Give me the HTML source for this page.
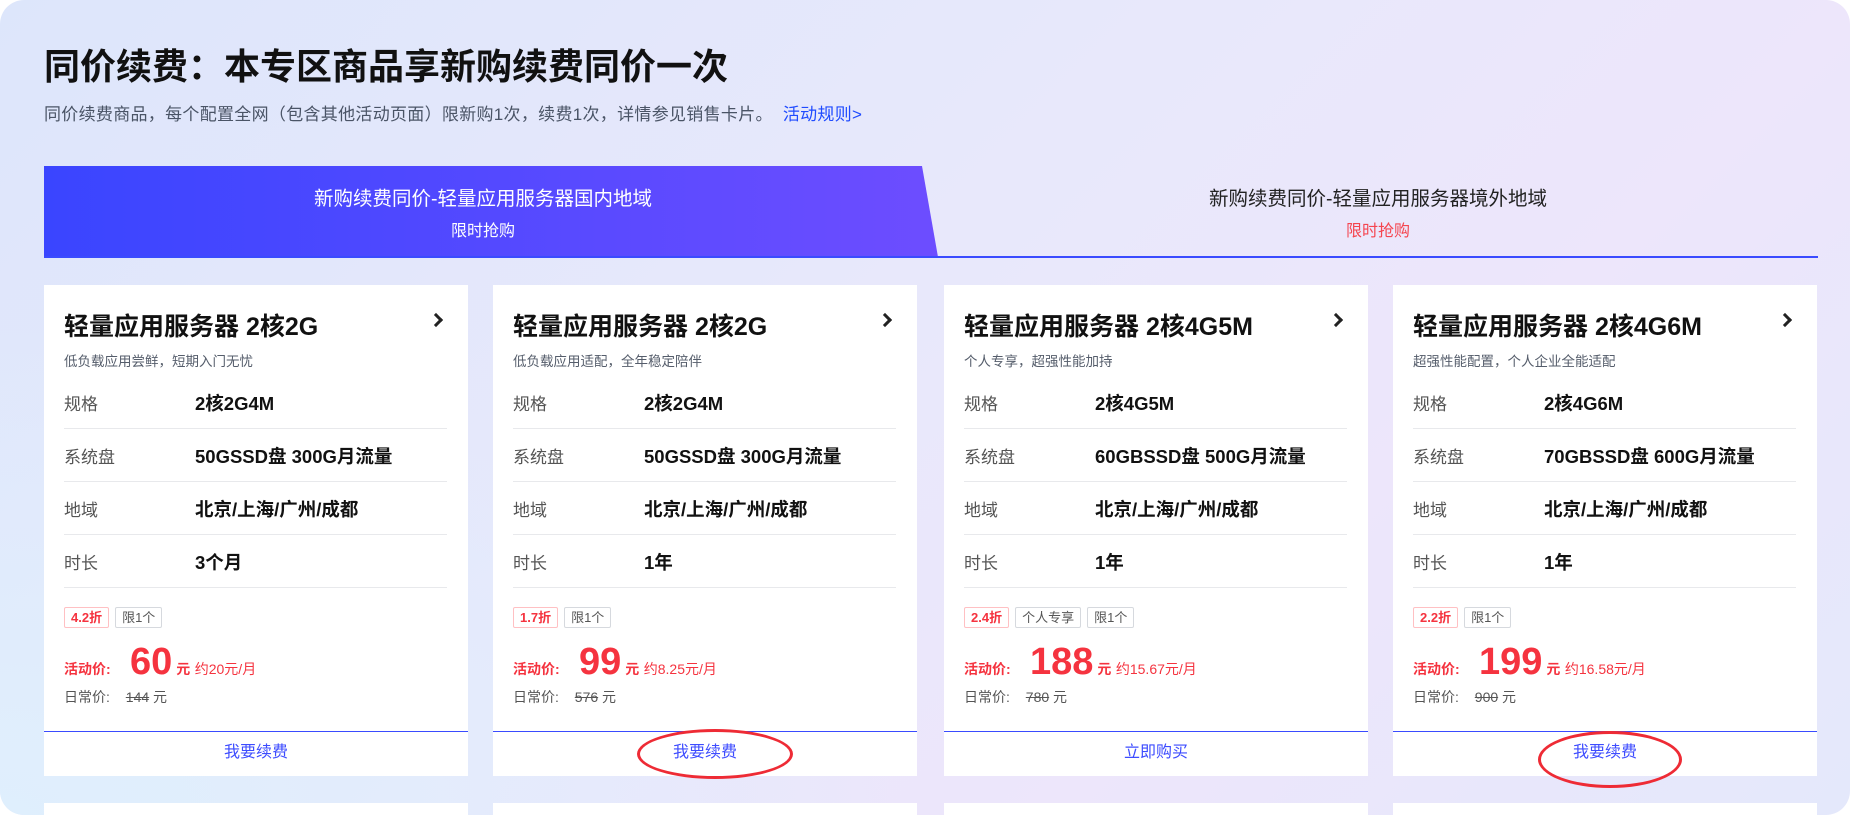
<!DOCTYPE html>
<html><head><meta charset="utf-8"><style>
*{margin:0;padding:0;box-sizing:border-box}
html,body{width:1850px;height:815px;overflow:hidden;background:#fff;font-family:"Liberation Sans","Noto Sans CJK SC",sans-serif}
.wrap{position:absolute;left:0;top:0;width:1850px;height:815px;border-radius:24px;background:linear-gradient(135deg,#dde6fb 0%,#e8e8fb 45%,#ede6fb 70%,#e4e8fb 100%);overflow:hidden}
.wrap:before{content:"";position:absolute;left:0;bottom:0;width:900px;height:500px;background:radial-gradient(ellipse at 0% 100%,#dfeffd 0%,rgba(223,239,253,0) 70%)}
h1{position:absolute;left:44px;top:38px;font-size:36px;font-weight:bold;color:#111;letter-spacing:0}
.sub{position:absolute;left:44px;top:100px;font-size:17px;color:#4a5466;letter-spacing:0.3px}
.sub a{color:#1f4bff;margin-left:10px}
.tabline{position:absolute;left:44px;top:256px;width:1774px;height:2px;background:#3a4bff}
.tab1{position:absolute;left:44px;top:166px;width:894px;height:91px;background:linear-gradient(90deg,#3a45ff,#6d4dff);clip-path:polygon(0 0,878px 0,894px 100%,0 100%);color:#fff;text-align:center}
.tab2{position:absolute;left:938px;top:166px;width:880px;height:91px;text-align:center;color:#222}
.t1{font-size:19.5px;margin-top:16px;padding-right:16px}
.t2{font-size:16px;margin-top:6px;padding-right:16px}
.tab2 .t1,.tab2 .t2{padding-right:0}
.tab2 .t2{color:#f5454f}
.card{position:absolute;top:285px;width:424px;height:491px;background:#fff}
.card2{position:absolute;top:803px;width:424px;height:40px;background:#fff}
.ct{position:absolute;left:20px;top:22px;font-size:25px;font-weight:bold;color:#111}
.arr{position:absolute;right:27px;top:30px;width:10px;height:10px;border-right:3px solid #222;border-top:3px solid #222;transform:rotate(45deg)}
.cs{position:absolute;left:20px;top:65px;font-size:13.5px;color:#555d6b}
.row{position:absolute;left:20px;width:383px;height:53px;border-bottom:1px solid #e8e9ec}
.row .l{position:absolute;left:0;top:14px;font-size:17px;color:#555}
.row .v{position:absolute;left:131px;top:14px;font-size:18.5px;font-weight:bold;color:#111}
.tags{position:absolute;left:20px;top:322px;display:flex;gap:6px}
.tag{height:21px;line-height:19px;padding:0 6px;font-size:13px;border:1px solid #d6d9de;color:#555;border-radius:2px}
.tag.r{border-color:#ffc0c3;color:#f5333f;font-weight:bold}
.pr{position:absolute;left:20px;top:356px;color:#f5333f;white-space:nowrap}
.pr .lb{font-size:14px;font-weight:bold;display:inline-block;width:66px}
.pr .n{font-size:38px;font-weight:bold}
.pr .y{font-size:14px;font-weight:bold;margin-left:4px}
.pr .m{font-size:14px}
.dp{position:absolute;left:20px;top:402px;font-size:14px;color:#555}
.dp s{margin-left:12px}
.btn{position:absolute;left:0;bottom:0;width:100%;height:45px;border-top:1.5px solid #3a4bff;text-align:center;line-height:42px;font-size:16px;color:#3d4cff}
.ell{position:absolute;border:3px solid #ee2b35;border-radius:50%}
</style></head><body><div class="wrap">
<h1>同价续费：本专区商品享新购续费同价一次</h1>
<div class="sub">同价续费商品，每个配置全网（包含其他活动页面）限新购1次，续费1次，详情参见销售卡片。<a>活动规则&gt;</a></div>
<div class="tab1"><div class="t1">新购续费同价-轻量应用服务器国内地域</div><div class="t2">限时抢购</div></div>
<div class="tab2"><div class="t1">新购续费同价-轻量应用服务器境外地域</div><div class="t2">限时抢购</div></div>
<div class="tabline"></div>

<div class="card" style="left:44px"><div class="ct">轻量应用服务器 2核2G</div><div class="arr"></div><div class="cs">低负载应用尝鲜，短期入门无忧</div>
<div class="row" style="top:91px"><span class="l">规格</span><span class="v">2核2G4M</span></div>
<div class="row" style="top:144px"><span class="l">系统盘</span><span class="v">50GSSD盘 300G月流量</span></div>
<div class="row" style="top:197px"><span class="l">地域</span><span class="v">北京/上海/广州/成都</span></div>
<div class="row" style="top:250px"><span class="l">时长</span><span class="v">3个月</span></div>
<div class="tags"><span class="tag r">4.2折</span><span class="tag">限1个</span></div>
<div class="pr"><span class="lb">活动价:</span><span class="n">60</span><span class="y">元</span> <span class="m">约20元/月</span></div>
<div class="dp">日常价: <s>144</s> 元</div><div class="btn">我要续费</div></div>

<div class="card" style="left:493px"><div class="ct">轻量应用服务器 2核2G</div><div class="arr"></div><div class="cs">低负载应用适配，全年稳定陪伴</div>
<div class="row" style="top:91px"><span class="l">规格</span><span class="v">2核2G4M</span></div>
<div class="row" style="top:144px"><span class="l">系统盘</span><span class="v">50GSSD盘 300G月流量</span></div>
<div class="row" style="top:197px"><span class="l">地域</span><span class="v">北京/上海/广州/成都</span></div>
<div class="row" style="top:250px"><span class="l">时长</span><span class="v">1年</span></div>
<div class="tags"><span class="tag r">1.7折</span><span class="tag">限1个</span></div>
<div class="pr"><span class="lb">活动价:</span><span class="n">99</span><span class="y">元</span> <span class="m">约8.25元/月</span></div>
<div class="dp">日常价: <s>576</s> 元</div><div class="btn">我要续费</div></div>

<div class="card" style="left:944px"><div class="ct">轻量应用服务器 2核4G5M</div><div class="arr"></div><div class="cs">个人专享，超强性能加持</div>
<div class="row" style="top:91px"><span class="l">规格</span><span class="v">2核4G5M</span></div>
<div class="row" style="top:144px"><span class="l">系统盘</span><span class="v">60GBSSD盘 500G月流量</span></div>
<div class="row" style="top:197px"><span class="l">地域</span><span class="v">北京/上海/广州/成都</span></div>
<div class="row" style="top:250px"><span class="l">时长</span><span class="v">1年</span></div>
<div class="tags"><span class="tag r">2.4折</span><span class="tag">个人专享</span><span class="tag">限1个</span></div>
<div class="pr"><span class="lb">活动价:</span><span class="n">188</span><span class="y">元</span> <span class="m">约15.67元/月</span></div>
<div class="dp">日常价: <s>780</s> 元</div><div class="btn">立即购买</div></div>

<div class="card" style="left:1393px"><div class="ct">轻量应用服务器 2核4G6M</div><div class="arr"></div><div class="cs">超强性能配置，个人企业全能适配</div>
<div class="row" style="top:91px"><span class="l">规格</span><span class="v">2核4G6M</span></div>
<div class="row" style="top:144px"><span class="l">系统盘</span><span class="v">70GBSSD盘 600G月流量</span></div>
<div class="row" style="top:197px"><span class="l">地域</span><span class="v">北京/上海/广州/成都</span></div>
<div class="row" style="top:250px"><span class="l">时长</span><span class="v">1年</span></div>
<div class="tags"><span class="tag r">2.2折</span><span class="tag">限1个</span></div>
<div class="pr"><span class="lb">活动价:</span><span class="n">199</span><span class="y">元</span> <span class="m">约16.58元/月</span></div>
<div class="dp">日常价: <s>900</s> 元</div><div class="btn">我要续费</div></div>

<div class="card2" style="left:44px"></div><div class="card2" style="left:493px"></div><div class="card2" style="left:944px"></div><div class="card2" style="left:1393px"></div>
<div class="ell" style="left:637px;top:729px;width:156px;height:50px"></div>
<div class="ell" style="left:1538px;top:731px;width:144px;height:57px"></div>
</div></body></html>
